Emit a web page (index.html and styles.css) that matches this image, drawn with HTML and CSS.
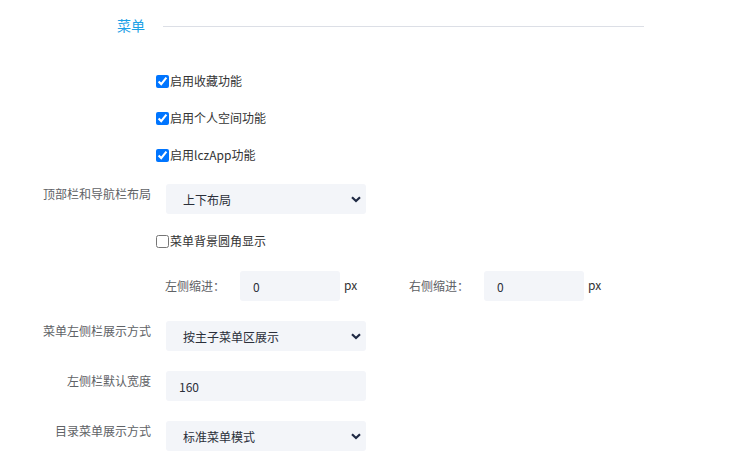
FILE: index.html
```html
<!DOCTYPE html>
<html lang="zh-CN">
<head>
<meta charset="utf-8">
<title>菜单设置</title>
<link rel="stylesheet" href="styles.css">
</head>
<body>
<div class="page">
  <div class="title-row">
    <span class="title">菜单</span>
    <span class="title-line"></span>
  </div>

  <div class="form">
    <label class="check-row"><input type="checkbox" checked><span>启用收藏功能</span></label>
    <label class="check-row"><input type="checkbox" checked><span>启用个人空间功能</span></label>
    <label class="check-row last-check"><input type="checkbox" checked><span>启用lczApp功能</span></label>

    <div class="form-item tight">
      <div class="label">顶部栏和导航栏布局</div>
      <div class="select-wrap">
        <select class="control"><option>上下布局</option></select>
        <svg class="chevron" width="10" height="7" viewBox="0 0 10 7"><polyline points="1,1.2 5,5 9,1.2" fill="none" stroke="#1f2a44" stroke-width="2.2"/></svg>
      </div>
    </div>

    <label class="check-row after-select"><input type="checkbox"><span>菜单背景圆角显示</span></label>

    <div class="indent-row">
      <div class="indent-group">
        <span class="indent-label">左侧缩进：</span>
        <input class="control small" type="text" value="0">
        <span class="unit">px</span>
      </div>
      <div class="indent-group">
        <span class="indent-label">右侧缩进：</span>
        <input class="control small" type="text" value="0">
        <span class="unit">px</span>
      </div>
    </div>

    <div class="form-item">
      <div class="label">菜单左侧栏展示方式</div>
      <div class="select-wrap">
        <select class="control"><option>按主子菜单区展示</option></select>
        <svg class="chevron" width="10" height="7" viewBox="0 0 10 7"><polyline points="1,1.2 5,5 9,1.2" fill="none" stroke="#1f2a44" stroke-width="2.2"/></svg>
      </div>
    </div>

    <div class="form-item">
      <div class="label">左侧栏默认宽度</div>
      <input class="control input" type="text" value="160">
    </div>

    <div class="form-item">
      <div class="label">目录菜单展示方式</div>
      <div class="select-wrap">
        <select class="control"><option>标准菜单模式</option></select>
        <svg class="chevron" width="10" height="7" viewBox="0 0 10 7"><polyline points="1,1.2 5,5 9,1.2" fill="none" stroke="#1f2a44" stroke-width="2.2"/></svg>
      </div>
    </div>
  </div>
</div>
</body>
</html>
```

FILE: styles.css
```css
* { box-sizing: border-box; }
html, body {
  margin: 0;
  padding: 0;
  background: #ffffff;
}
body {
  font-family: "Noto Sans CJK SC", "Noto Sans", sans-serif;
  font-size: 12px;
  color: #333333;
  width: 754px;
  height: 463px;
  overflow: hidden;
}
.title-row {
  display: flex;
  align-items: center;
  padding: 16px 110px 0 117px;
  height: 34px;
}
.title {
  font-size: 14px;
  line-height: 18px;
  color: #1ba1e6;
}
.title-line {
  flex: 1;
  height: 1px;
  background: #dcdfe6;
  margin-left: 18px;
  margin-top: 2px;
}
.form {
  padding-top: 38px;
}
.check-row {
  display: flex;
  align-items: center;
  height: 18px;
  margin: 0 0 19px 156px;
  line-height: 18px;
  color: #333333;
  width: max-content;
}
.check-row.last-check { margin-bottom: 20px; }
.check-row.after-select { margin-bottom: 21px; }
.check-row input {
  width: 13px;
  height: 13px;
  margin: 0 1px 0 0;
}
.form-item {
  display: flex;
  align-items: flex-start;
  margin-bottom: 20px;
}
.form-item.tight { margin-bottom: 18px; }
.label {
  width: 166px;
  padding-right: 15px;
  text-align: right;
  line-height: 20px;
  color: #606266;
}
.select-wrap {
  position: relative;
  width: 200px;
  height: 30px;
}
.control {
  appearance: none;
  -webkit-appearance: none;
  border: none;
  outline: none;
  border-radius: 3px;
  background: #f3f5f9;
  height: 30px;
  font-family: inherit;
  font-size: 12px;
  color: #2b2f3a;
  margin: 0;
}
select.control {
  width: 200px;
  padding: 0 20px 0 17px;
}
.input {
  width: 200px;
  padding: 0 13px;
}
.chevron {
  position: absolute;
  right: 5px;
  top: 12px;
  pointer-events: none;
}
.indent-row {
  display: flex;
  padding-left: 165px;
  margin-bottom: 20px;
  height: 30px;
}
.indent-group {
  display: flex;
  align-items: center;
  width: 244px;
}
.indent-label {
  width: 75px;
  color: #606266;
  line-height: 20px;
}
.control.small {
  width: 100px;
  padding: 0 13px;
}
.unit {
  margin-left: 4px;
  color: #333333;
  margin-top: -3px;
}
```
